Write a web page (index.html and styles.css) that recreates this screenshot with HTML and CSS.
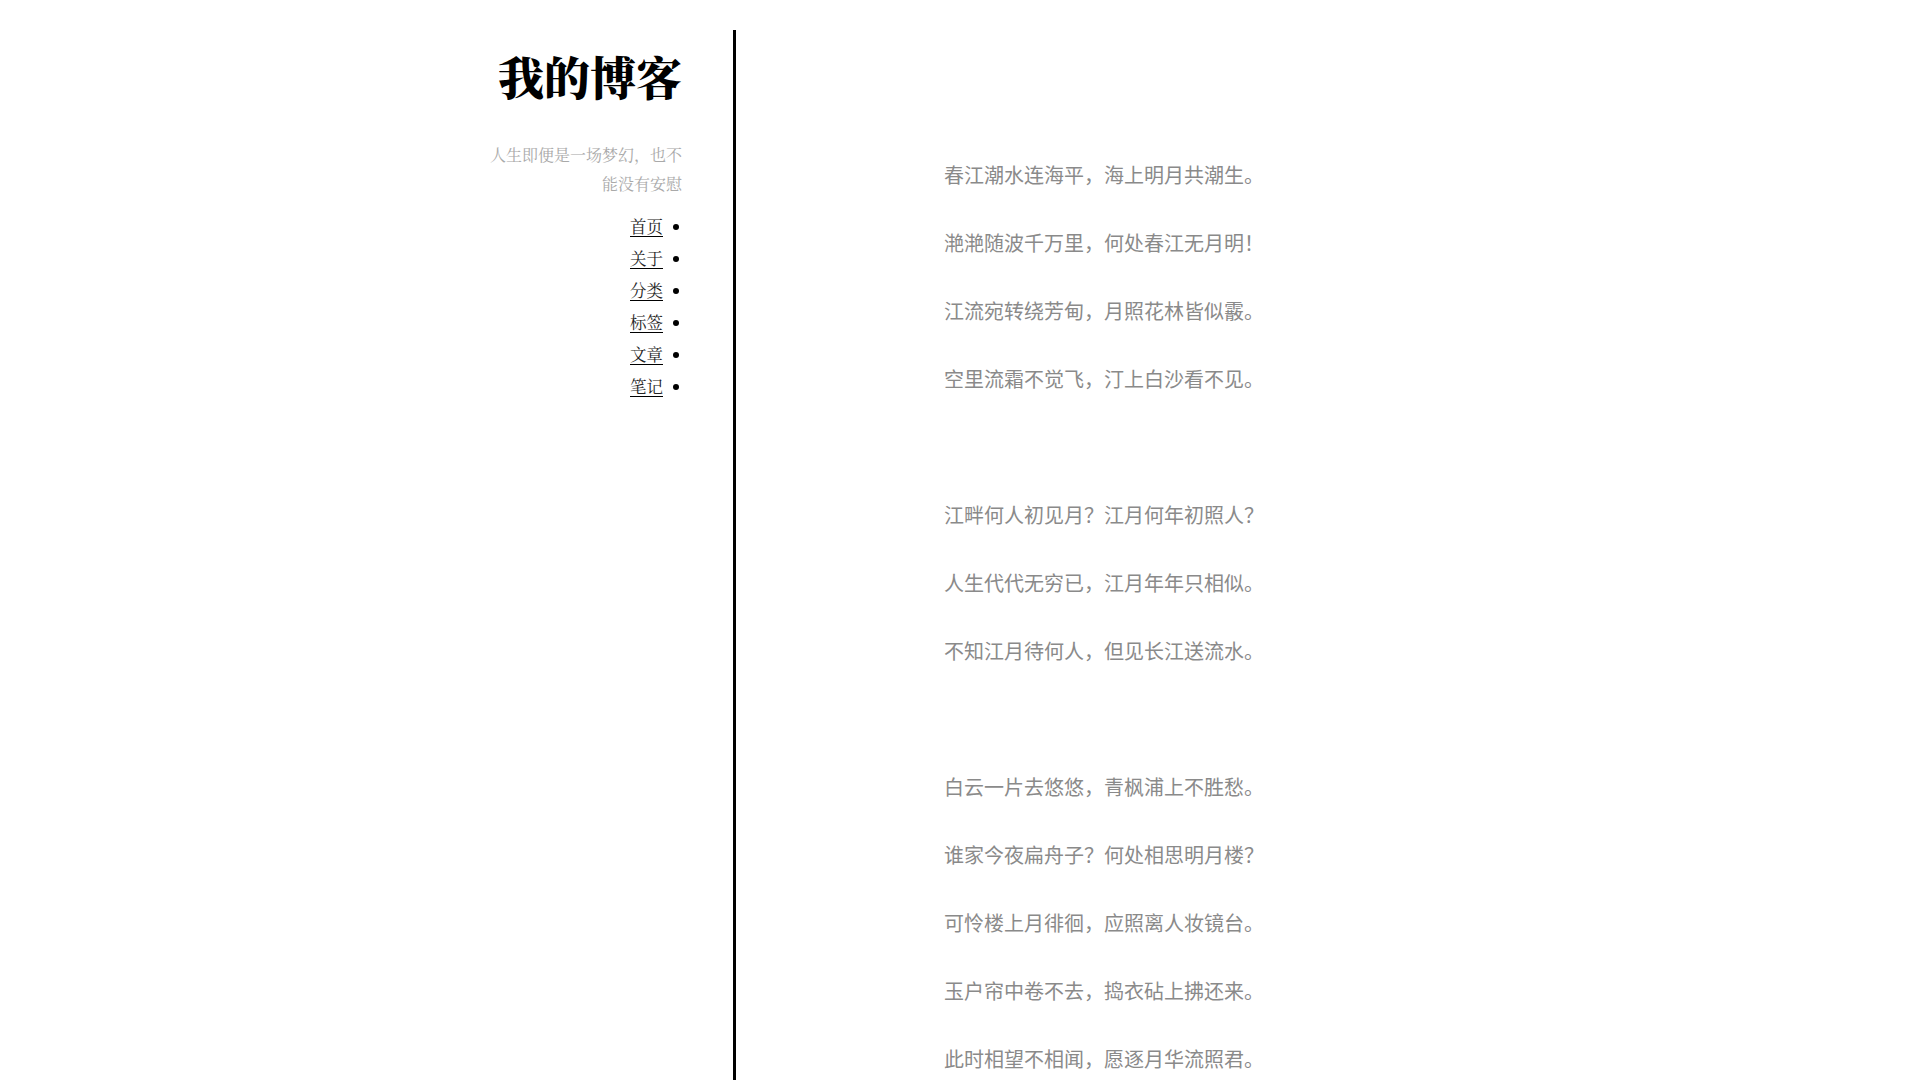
FILE: index.html
```html
<!DOCTYPE html>
<html lang="zh-CN">
<head>
<meta charset="utf-8">
<title>我的博客</title>
<link rel="stylesheet" href="styles.css">
</head>
<body>
<div class="page">
  <aside class="sidebar">
    <h1 class="site-title">我的博客</h1>
    <p class="site-desc">人生即便是一场梦幻，也不能没有安慰</p>
    <ul class="nav">
      <li><a href="#">首页</a></li>
      <li><a href="#">关于</a></li>
      <li><a href="#">分类</a></li>
      <li><a href="#">标签</a></li>
      <li><a href="#">文章</a></li>
      <li><a href="#">笔记</a></li>
    </ul>
  </aside>
  <main class="content">
    <p>春江潮水连海平，海上明月共潮生。</p>
    <p>滟滟随波千万里，何处春江无月明！</p>
    <p>江流宛转绕芳甸，月照花林皆似霰。</p>
    <p>空里流霜不觉飞，汀上白沙看不见。</p>
    <p class="blank"></p>
    <p>江畔何人初见月？江月何年初照人？</p>
    <p>人生代代无穷已，江月年年只相似。</p>
    <p>不知江月待何人，但见长江送流水。</p>
    <p class="blank"></p>
    <p>白云一片去悠悠，青枫浦上不胜愁。</p>
    <p>谁家今夜扁舟子？何处相思明月楼？</p>
    <p>可怜楼上月徘徊，应照离人妆镜台。</p>
    <p>玉户帘中卷不去，捣衣砧上拂还来。</p>
    <p>此时相望不相闻，愿逐月华流照君。</p>
    <p>鸿雁长飞光不度，鱼龙潜跃水成文。</p>
    <p class="blank"></p>
    <p>昨夜闲潭梦落花，可怜春半不还家。</p>
    <p>江水流春去欲尽，江潭落月复西斜。</p>
    <p>斜月沉沉藏海雾，碣石潇湘无限路。</p>
    <p>不知乘月几人归，落月摇情满江树。</p>
  </main>
</div>
</body>
</html>
```

FILE: styles.css
```css
html, body {
  margin: 0;
  padding: 0;
  background: #ffffff;
}

body {
  font-family: "Liberation Serif", "Noto Serif CJK SC", "Noto Sans CJK SC", serif;
}

.page {
  display: flex;
  align-items: stretch;
  padding-top: 30px;
  padding-left: 480px;
}

.sidebar {
  flex: 0 0 202px;
  width: 202px;
  padding-right: 51px;
  border-right: 3px solid #000000;
  text-align: right;
}

.site-title {
  margin: 18px 0 0 0;
  font-family: "Noto Serif CJK SC", "Noto Serif CJK", "Noto Sans CJK SC", serif;
  font-size: 46px;
  line-height: 55px;
  font-weight: 900;
  color: #000000;
  white-space: nowrap;
}

.site-desc {
  margin: 38px 0 0 0;
  font-family: "Noto Serif CJK SC", "Noto Sans CJK SC", serif;
  font-size: 16px;
  line-height: 28.6px;
  color: #a9a9a9;
}

.nav {
  list-style: none;
  margin: 12px 0 0 0;
  padding: 0 3px 0 0;
}

.nav li {
  display: flex;
  justify-content: flex-end;
  align-items: center;
  height: 32px;
  font-family: "Noto Serif CJK SC", "Noto Sans CJK SC", serif;
  font-size: 16.5px;
}

.nav li::after {
  content: "";
  width: 6px;
  height: 6px;
  margin-left: 10px;
  margin-top: 2px;
  border-radius: 50%;
  background: #000000;
}

.nav a {
  color: #222222;
  text-decoration: underline;
  text-decoration-color: #000000;
  text-underline-offset: 3px;
}

.content {
  flex: 1 1 auto;
  padding: 111px 0 40px 208px;
  font-family: "Noto Sans CJK SC", "Noto Sans", sans-serif;
  font-size: 20px;
  color: #8a8a8a;
}

.content p {
  margin: 0;
  height: 68px;
  line-height: 68px;
  white-space: nowrap;
}
```
